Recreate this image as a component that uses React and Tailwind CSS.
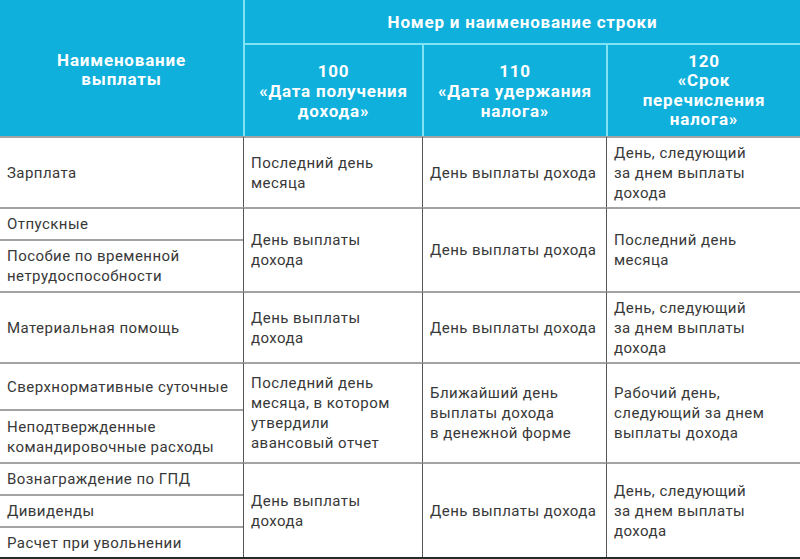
import React from "react";

const F = { fontFamily: "Roboto, 'Noto Sans', sans-serif" };

function B({ children, className = "" }) {
  return (
    <div className={"flex items-center border-t-2 border-[#a3a3a3] text-[15px] leading-[20px] tracking-[0.45px] text-[#383838] " + className}>
      {children}
    </div>
  );
}

const H = "bg-[#10b0dc] flex items-center justify-center text-center text-white font-bold text-[17px] tracking-[0.8px]";

export default function App() {
  return (
    <div className="w-[800px] h-[559px] bg-white overflow-hidden" style={F}>
      <div className="grid grid-cols-[243px_179px_184px_194px] grid-rows-[45px_91px_71px_32px_52px_71px_47px_53px_32px_32px_31px] border-b-2 border-[#2a2a2a]">
        {/* header */}
        <div className={"row-span-2 leading-[19.5px] pt-[4px] " + H}>
          <div>Наименование<br />выплаты</div>
        </div>
        <div className={"col-span-3 border-l-2 border-b-2 border-[#7fe3f4] pt-[2px] " + H}>
          Номер и наименование строки
        </div>
        <div className={"border-l-2 border-[#7fe3f4] leading-[20px] " + H}>
          <div>100<br />«Дата получения<br />дохода»</div>
        </div>
        <div className={"border-l-2 border-[#7fe3f4] leading-[20px] " + H}>
          <div>110<br />«Дата удержания<br />налога»</div>
        </div>
        <div className={"border-l-2 border-[#7fe3f4] leading-[19.5px] " + H}>
          <div>120<br />«Срок<br />перечисления<br />налога»</div>
        </div>

        {/* group 1 */}
        <B className="col-start-1 row-start-3 border-t-0 pl-[7px]">Зарплата</B>
        <B className="col-start-2 row-start-3 border-t-0 border-l border-l-[#555] pl-[7px]"><div>Последний день<br />месяца</div></B>
        <B className="col-start-3 row-start-3 border-t-0 border-l border-l-[#555] pl-[7px]">День выплаты дохода</B>
        <B className="col-start-4 row-start-3 border-t-0 border-l border-l-[#555] pl-[7px]"><div>День, следующий<br />за днем выплаты<br />дохода</div></B>

        {/* group 2 */}
        <B className="col-start-1 row-start-4 pl-[7px]">Отпускные</B>
        <B className="col-start-1 row-start-5 pl-[7px]"><div>Пособие по временной<br />нетрудоспособности</div></B>
        <B className="col-start-2 row-start-4 row-span-2 border-l border-l-[#555] pl-[7px]"><div>День выплаты<br />дохода</div></B>
        <B className="col-start-3 row-start-4 row-span-2 border-l border-l-[#555] pl-[7px]">День выплаты дохода</B>
        <B className="col-start-4 row-start-4 row-span-2 border-l border-l-[#555] pl-[7px]"><div>Последний день<br />месяца</div></B>

        {/* group 3 */}
        <B className="col-start-1 row-start-6 pl-[7px]">Материальная помощь</B>
        <B className="col-start-2 row-start-6 border-l border-l-[#555] pl-[7px]"><div>День выплаты<br />дохода</div></B>
        <B className="col-start-3 row-start-6 border-l border-l-[#555] pl-[7px]">День выплаты дохода</B>
        <B className="col-start-4 row-start-6 border-l border-l-[#555] pl-[7px]"><div>День, следующий<br />за днем выплаты<br />дохода</div></B>

        {/* group 4 */}
        <B className="col-start-1 row-start-7 pl-[7px]">Сверхнормативные суточные</B>
        <B className="col-start-1 row-start-8 pl-[7px]"><div>Неподтвержденные<br />командировочные расходы</div></B>
        <B className="col-start-2 row-start-7 row-span-2 border-l border-l-[#555] pl-[7px]"><div>Последний день<br />месяца, в котором<br />утвердили<br />авансовый отчет</div></B>
        <B className="col-start-3 row-start-7 row-span-2 border-l border-l-[#555] pl-[7px]"><div>Ближайший день<br />выплаты дохода<br />в денежной форме</div></B>
        <B className="col-start-4 row-start-7 row-span-2 border-l border-l-[#555] pl-[7px]"><div>Рабочий день,<br />следующий за днем<br />выплаты дохода</div></B>

        {/* group 5 */}
        <B className="col-start-1 row-start-9 pl-[7px]">Вознаграждение по ГПД</B>
        <B className="col-start-1 row-start-10 pl-[7px]">Дивиденды</B>
        <B className="col-start-1 row-start-11 pl-[7px]">Расчет при увольнении</B>
        <B className="col-start-2 row-start-9 row-span-3 border-l border-l-[#555] pl-[7px]"><div>День выплаты<br />дохода</div></B>
        <B className="col-start-3 row-start-9 row-span-3 border-l border-l-[#555] pl-[7px]">День выплаты дохода</B>
        <B className="col-start-4 row-start-9 row-span-3 border-l border-l-[#555] pl-[7px]"><div>День, следующий<br />за днем выплаты<br />дохода</div></B>
      </div>
    </div>
  );
}
